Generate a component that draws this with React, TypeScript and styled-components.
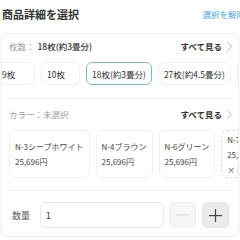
import React from "react";
import styled, { createGlobalStyle } from "styled-components";

const GlobalStyle = createGlobalStyle`
  html, body {
    margin: 0;
    padding: 0;
    background: #ffffff;
    overflow: hidden;
  }
  body {
    font-family: "Noto Sans CJK JP", "Noto Sans", sans-serif;
    color: #333333;
  }
`;

const Page = styled.div`
  width: 240px;
  height: 240px;
  overflow: hidden;
`;

const Header = styled.header`
  width: 247px;
  height: 28px;
  display: flex;
  align-items: center;
  justify-content: space-between;
  padding: 0 2px;
  box-sizing: border-box;
  margin-bottom: 5px;
`;

const Title = styled.h1`
  margin: 0;
  font-size: 11px;
  font-weight: 700;
  color: #333333;
`;

const ClearLink = styled.span`
  font-size: 8.5px;
  color: #47a2dc;
  white-space: nowrap;
`;

const Card = styled.section`
  margin-left: 1px;
  width: 238px;
  height: 204px;
  box-sizing: border-box;
  border: 1px solid #eeeeee;
  border-radius: 6px;
  box-shadow: 0 0 3px rgba(0, 0, 0, 0.04);
  overflow: hidden;
  display: flex;
  flex-direction: column;
`;

const SectionHead = styled.div<{ $top: number }>`
  height: 24px;
  flex: 0 0 24px;
  display: flex;
  align-items: center;
  justify-content: space-between;
  padding: 0 6px 0 7px;
  margin-top: ${(p) => p.$top}px;
  font-size: 8.5px;
`;

const Label = styled.span`
  color: #a0a0a0;
`;

const Value = styled.span`
  color: #333333;
  font-weight: 500;
  margin-left: 3px;
`;

const SeeAll = styled.span`
  display: flex;
  align-items: center;
  gap: 5px;
  font-weight: 700;
  color: #333333;
`;

const Scroller = styled.div<{ $top: number }>`
  overflow: hidden;
  flex: 0 0 auto;
  margin-top: ${(p) => p.$top}px;
`;

const Track = styled.div<{ $offset: number }>`
  display: flex;
  gap: 6px;
  width: max-content;
  margin-left: ${(p) => p.$offset}px;
`;

const Chip = styled.div<{ $active?: boolean }>`
  height: 23px;
  min-width: 39px;
  box-sizing: border-box;
  padding: 0 5px;
  display: flex;
  align-items: center;
  border: 1px solid ${(p) => (p.$active ? "#86b6bd" : "#efefef")};
  border-radius: 6px;
  font-size: 8.5px;
  color: #333333;
  white-space: nowrap;
`;

const Divider = styled.hr<{ $top: number }>`
  border: none;
  border-top: 1px solid #f0f0f0;
  margin: ${(p) => p.$top}px 6px 0;
  flex: 0 0 auto;
`;

const ColorCard = styled.div<{ $dashed?: boolean }>`
  height: 48px;
  box-sizing: border-box;
  padding: 0 5px;
  display: flex;
  flex-direction: column;
  justify-content: center;
  border: 1px ${(p) => (p.$dashed ? "dashed #dddddd" : "solid #efefef")};
  border-radius: 6px;
  font-size: 8px;
  line-height: 15px;
  color: #444444;
  white-space: nowrap;
`;

const QtyRow = styled.div`
  display: flex;
  align-items: center;
  margin-top: 11px;
  padding-left: 10px;
`;

const QtyLabel = styled.span`
  width: 28px;
  font-size: 9px;
  color: #555555;
`;

const QtyInput = styled.div`
  width: 124px;
  height: 26px;
  box-sizing: border-box;
  border: 1px solid #e8e8e8;
  border-radius: 6px;
  padding: 0 5px;
  display: flex;
  align-items: center;
  font-size: 8.5px;
  color: #333333;
`;

const StepButton = styled.div<{ $disabled?: boolean }>`
  width: 27px;
  height: 26px;
  margin-left: ${(p) => (p.$disabled ? 5 : 6)}px;
  box-sizing: border-box;
  border-radius: 5px;
  display: flex;
  align-items: center;
  justify-content: center;
  background: ${(p) => (p.$disabled ? "#f6f6f6" : "#ebebeb")};
  border: 1px solid ${(p) => (p.$disabled ? "#efefef" : "#e6e6e6")};
`;

const Chevron = () => (
  <svg width="5" height="9" viewBox="0 0 5 9">
    <path d="M0.5 0.5 L4.5 4.5 L0.5 8.5" fill="none" stroke="#b0b0b0" strokeWidth="0.9" />
  </svg>
);

const sizes = ["9枚", "10枚", "18枚(約3畳分)", "27枚(約4.5畳分)", "36枚(約6畳分)"];

const colors = [
  { name: "N-3シープホワイト", price: "25,696円" },
  { name: "N-4ブラウン", price: "25,696円" },
  { name: "N-6グリーン", price: "25,696円" },
];

export default function App() {
  return (
    <Page>
      <GlobalStyle />
      <Header>
        <Title>商品詳細を選択</Title>
        <ClearLink>選択を解除</ClearLink>
      </Header>
      <Card>
        <SectionHead $top={0}>
          <span>
            <Label>枚数：</Label>
            <Value>18枚(約3畳分)</Value>
          </span>
          <SeeAll>
            すべて見る
            <Chevron />
          </SeeAll>
        </SectionHead>
        <Scroller $top={4}>
          <Track $offset={-6}>
            {sizes.map((s) => (
              <Chip key={s} $active={s === "18枚(約3畳分)"}>
                {s}
              </Chip>
            ))}
          </Track>
        </Scroller>
        <Divider $top={13} />
        <SectionHead $top={3}>
          <span>
            <Label>カラー：未選択</Label>
          </span>
          <SeeAll>
            すべて見る
            <Chevron />
          </SeeAll>
        </SectionHead>
        <Scroller $top={4}>
          <Track $offset={7}>
            {colors.map((c) => (
              <ColorCard key={c.name}>
                <div>{c.name}</div>
                <div>{c.price}</div>
              </ColorCard>
            ))}
            <ColorCard $dashed>
              <div>N-7ブラック</div>
              <div>25,696円</div>
              <div>× 売り切れ</div>
            </ColorCard>
          </Track>
        </Scroller>
        <Divider $top={12} />
        <QtyRow>
          <QtyLabel>数量</QtyLabel>
          <QtyInput>1</QtyInput>
          <StepButton $disabled>
            <svg width="13" height="2" viewBox="0 0 13 2">
              <rect x="0" y="0.5" width="13" height="1" fill="#d6d6d6" />
            </svg>
          </StepButton>
          <StepButton>
            <svg width="13" height="13" viewBox="0 0 13 13">
              <rect x="0" y="6" width="13" height="1.2" fill="#444444" />
              <rect x="5.9" y="0" width="1.2" height="13" fill="#444444" />
            </svg>
          </StepButton>
        </QtyRow>
      </Card>
    </Page>
  );
}
